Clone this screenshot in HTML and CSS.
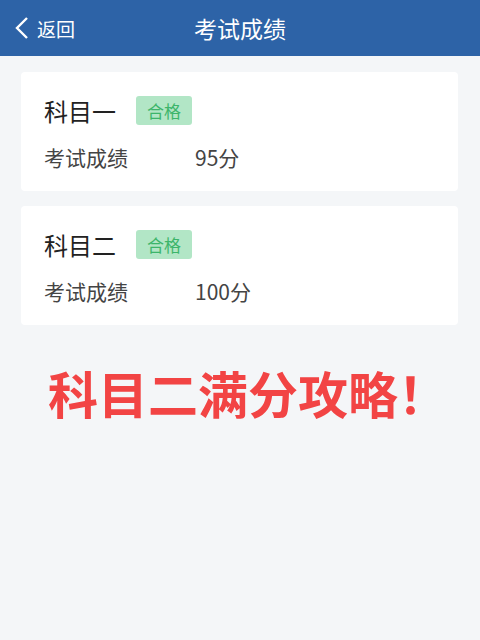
FILE: index.html
```html
<!DOCTYPE html>
<html>
<head>
    <meta charset="UTF-8">
    <title>考试成绩</title>
    <link rel="stylesheet" href="styles.css">
</head>
<body>
    <div class="header">
        <div class="back">
            <svg width="16" height="24" viewBox="0 0 16 24"><path d="M13 2 L3 12 L13 22" fill="none" stroke="#ffffff" stroke-width="2.4"/></svg>
            <span>返回</span>
        </div>
        <div class="title">考试成绩</div>
    </div>
    <div class="content">
        <div class="card">
            <div class="card-head">
                <span class="subject">科目一</span>
                <span class="badge">合格</span>
            </div>
            <div class="row">
                <span class="label">考试成绩</span>
                <span class="value">95分</span>
            </div>
        </div>
        <div class="card">
            <div class="card-head">
                <span class="subject">科目二</span>
                <span class="badge">合格</span>
            </div>
            <div class="row">
                <span class="label">考试成绩</span>
                <span class="value">100分</span>
            </div>
        </div>
        <div class="slogan">科目二满分攻略！</div>
    </div>
</body>
</html>
```

FILE: styles.css
```css
body {
    margin: 0;
    background-color: #f4f6f8;
    font-family: "Noto Sans CJK SC", "Noto Sans", sans-serif;
    width: 480px;
    height: 640px;
}
.header {
    position: relative;
    height: 56px;
    background-color: #2d63a7;
    display: flex;
    align-items: center;
    justify-content: center;
    color: #ffffff;
}
.back {
    position: absolute;
    left: 14px;
    top: 0;
    height: 56px;
    display: flex;
    align-items: center;
    gap: 7px;
    font-size: 19px;
}
.title {
    font-size: 23px;
}
.content {
    padding: 16px 22px 0 21px;
    display: flex;
    flex-direction: column;
    gap: 15px;
}
.card {
    background-color: #ffffff;
    border-radius: 4px;
    height: 119px;
    padding: 22px 0 0 23px;
    box-sizing: border-box;
}
.card-head {
    display: flex;
    align-items: center;
    height: 32px;
}
.subject {
    font-size: 24px;
    color: #222222;
    width: 92px;
}
.badge {
    background-color: #b2e6c6;
    color: #3cb56a;
    font-size: 17px;
    padding: 2px 11px;
    border-radius: 3px;
    line-height: 25px;
}
.row {
    display: flex;
    margin-top: 16px;
    font-size: 21px;
    line-height: 30px;
    color: #444444;
}
.label {
    width: 151px;
}
.slogan {
    margin-top: 22px;
    margin-left: 27px;
    font-size: 50px;
    font-weight: bold;
    color: #f24444;
    line-height: 60px;
}
```
